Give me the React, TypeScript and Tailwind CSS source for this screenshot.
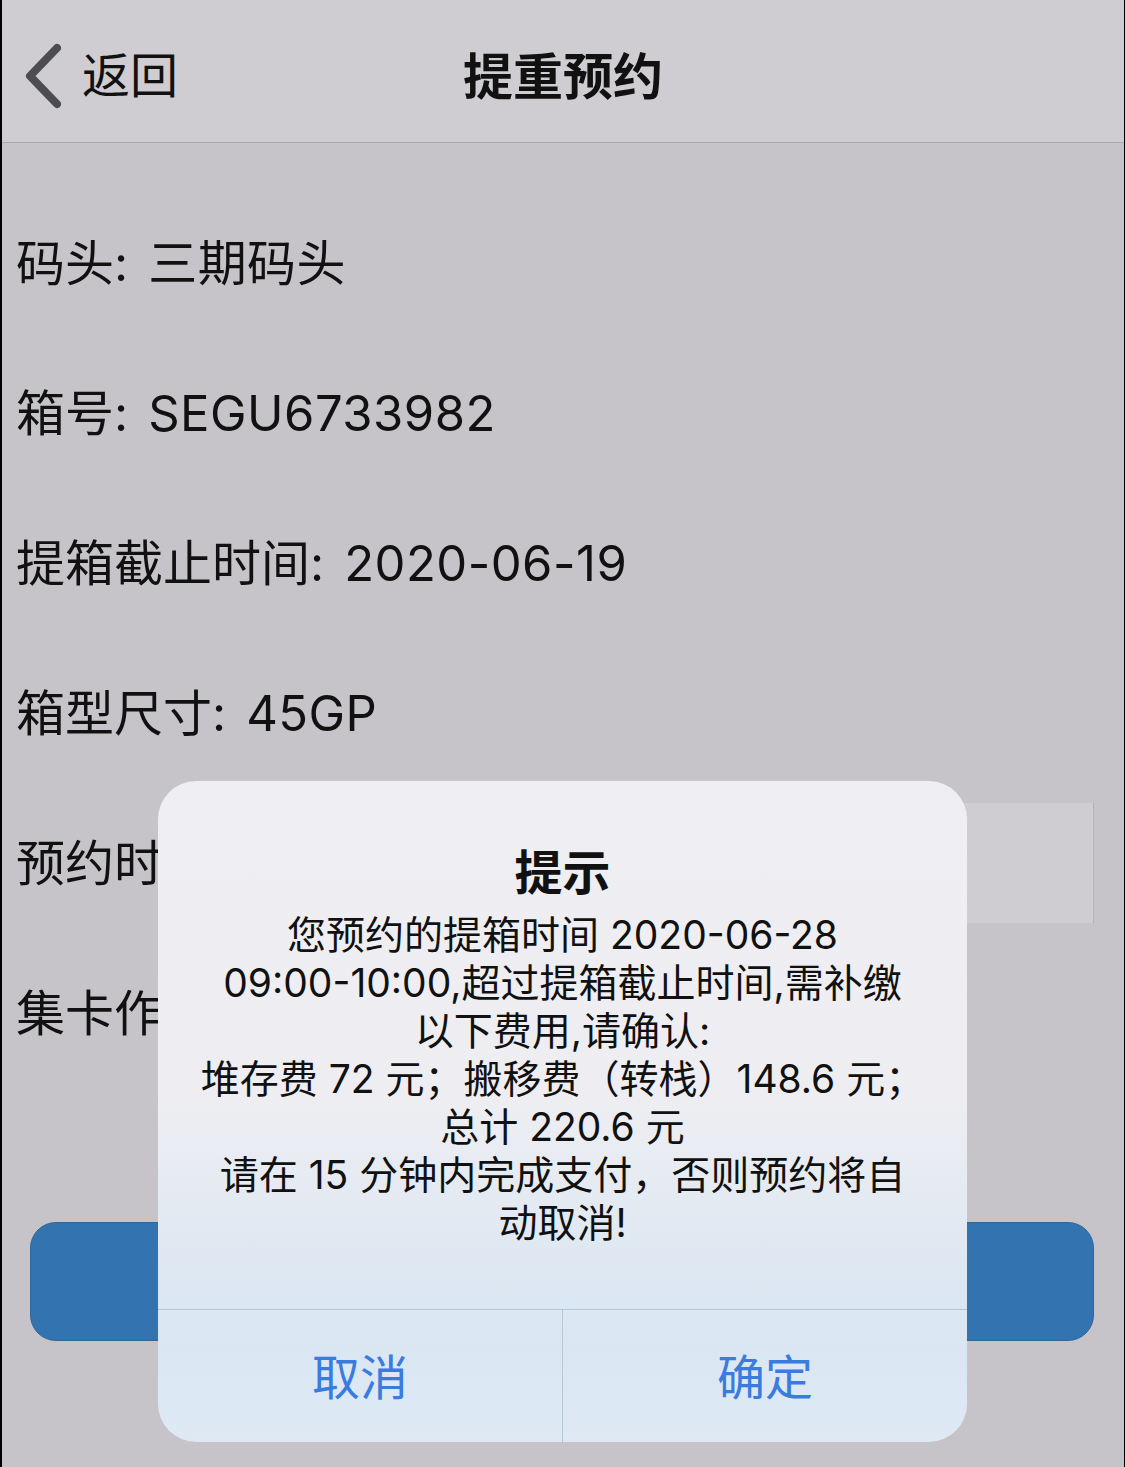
const FONT = "font-['Inter','Noto_Sans_CJK_SC',sans-serif]";

const rows = [
  { label: "码头", value: "三期码头" },
  { label: "箱号", value: "SEGU6733982" },
  { label: "提箱截止时间", value: "2020-06-19" },
  { label: "箱型尺寸", value: "45GP" },
];

const message = [
  "您预约的提箱时间 2020-06-28",
  "09:00-10:00,超过提箱截止时间,需补缴",
  "以下费用,请确认:",
  "堆存费 72 元；搬移费（转栈）148.6 元；",
  "总计 220.6 元",
  "请在 15 分钟内完成支付，否则预约将自",
  "动取消!",
];

function BackChevron() {
  return (
    <svg width="40" height="66" viewBox="0 0 40 66" className="shrink-0">
      <path
        d="M32 5 L5 33 L32 61"
        fill="none"
        stroke="#4d4c50"
        strokeWidth="8"
        strokeLinecap="round"
        strokeLinejoin="round"
      />
    </svg>
  );
}

export default function App() {
  return (
    <div
      className={`relative h-[1467px] w-[1125px] overflow-hidden border-l-2 border-r border-black bg-[#c6c4c9] text-[#111] ${FONT}`}
    >
      {/* nav bar */}
      <header className="relative flex h-[143px] items-center border-b border-[#a9a7ac] bg-[#cfcdd1] pl-[23px]">
        <div className="flex items-center gap-[17px] pt-[10px]">
          <BackChevron />
          <span className="text-[48px] leading-none">返回</span>
        </div>
        <h1 className="absolute inset-x-0 top-[52px] text-center text-[50px] font-bold leading-none">
          提重预约
        </h1>
      </header>

      {/* form */}
      <div className="flex flex-col pt-[45px]">
        {rows.map((r) => (
          <div key={r.label} className="flex h-[150px] items-center px-[14px] text-[49px] leading-none">
            <span>{r.label}:</span>
            <span className="ml-[20px] tracking-[0.01em]">{r.value}</span>
          </div>
        ))}
        <div className="flex h-[150px] items-center gap-[30px] pl-[14px] pr-[30px] text-[49px] leading-none">
          <span className="shrink-0">预约时间:</span>
          <div className="flex h-[120px] flex-1 items-center justify-end border-r border-[#b4b2b7] bg-[#cfcdd1] pr-[127px]">
            2020-06-28 09:00-10:00
          </div>
        </div>
        <div className="flex h-[150px] items-center gap-[30px] pl-[14px] text-[49px] leading-none">
          <span className="shrink-0">集卡作业:</span>
          <div className="flex h-[113px] w-[560px] items-center rounded-[10px] border border-[#9d9ba1]">
            <span className="ml-auto mr-[6px] h-0 w-0 border-x-[6px] border-t-[7px] border-x-transparent border-t-[#333]" />
          </div>
        </div>
        <button className="ml-[28px] mr-[30px] mt-[134px] h-[119px] rounded-[26px] border border-[#2c679d] bg-[#3373b0] text-[48px] text-white">
          提交预约
        </button>
      </div>

      {/* alert */}
      <div className="absolute left-[156px] top-[781px] flex h-[661px] w-[809px] flex-col overflow-hidden rounded-[38px] bg-[linear-gradient(to_bottom,#efeef2_0%,#eeeef2_48%,#dce7f2_76%,#dae7f3_86%,#dee9f4_100%)]">
        <div className="flex flex-1 flex-col items-center pt-[64px]">
          <div className="text-[48px] font-bold leading-[56px]">提示</div>
          <div className="mt-[10px] flex flex-col items-center text-[39px] leading-[48px]">
            {message.map((line) => (
              <div key={line} className="whitespace-pre">
                {line}
              </div>
            ))}
          </div>
        </div>
        <div className="flex h-[133px] border-t border-[#b6c7d5] text-[48px] text-[#3a7be0]">
          <button className="flex flex-1 items-center justify-center border-r border-[#b6c7d5] pt-[4px]">
            取消
          </button>
          <button className="flex flex-1 items-center justify-center pt-[4px]">确定</button>
        </div>
      </div>
    </div>
  );
}
